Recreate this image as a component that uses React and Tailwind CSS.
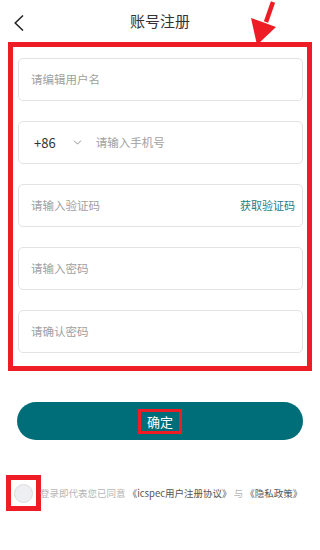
import { ChevronDown } from 'lucide-react'

const font = { fontFamily: '"Noto Sans CJK SC", "Noto Sans", sans-serif' }

function Field({ children, className = '' }) {
  return (
    <div className={`h-[43px] flex items-center border border-[#e3e3e3] rounded-[5px] bg-white px-[12px] ${className}`}>
      {children}
    </div>
  )
}

function App() {
  return (
    <div className="relative w-[320px] h-[550px] bg-white overflow-hidden" style={font}>
      <div className="h-[42px] flex items-center relative">
        <svg className="absolute left-[14px] top-[15px]" width="10" height="16" viewBox="0 0 10 16">
          <polyline points="9,0.5 1.2,8 9,15.5" fill="none" stroke="#222" strokeWidth="1.5" />
        </svg>
        <h1 className="w-full text-center text-[15px] text-[#333] leading-none -mt-[1px]">账号注册</h1>
      </div>

      <svg className="absolute left-[246px] top-0" width="36" height="48" viewBox="0 0 36 48">
        <line x1="27" y1="2" x2="20" y2="22" stroke="#ee1c25" strokeWidth="4.5" />
        <polygon points="5,18 30,27 11,45" fill="#ee1c25" />
      </svg>

      <div className="mx-[8px] border-[5px] border-[#ee1c25] pt-[11px] pb-[13px] pl-[5px] pr-[4px] flex flex-col gap-[20px]">
        <Field>
          <span className="text-[11.5px] text-[#a0a0a0]">请编辑用户名</span>
        </Field>
        <Field>
          <span className="text-[13px] text-[#333] ml-[3px]">+86</span>
          <ChevronDown size={13} strokeWidth={1.5} className="text-[#777] ml-[15px]" />
          <span className="text-[11.5px] text-[#a0a0a0] ml-[12px]">请输入手机号</span>
        </Field>
        <Field className="justify-between pr-[7px]">
          <span className="text-[11.5px] text-[#a0a0a0]">请输入验证码</span>
          <span className="text-[11px] text-[#1b7d85]">获取验证码</span>
        </Field>
        <Field>
          <span className="text-[11.5px] text-[#a0a0a0]">请输入密码</span>
        </Field>
        <Field>
          <span className="text-[11.5px] text-[#a0a0a0]">请确认密码</span>
        </Field>
      </div>

      <div className="px-[17px] mt-[31px]">
        <button className="w-full h-[38px] rounded-full bg-[#006e78] flex items-center justify-center">
          <span className="border-[3px] border-[#ee1c25] px-[6px] text-[13px] text-white leading-[19px]">确定</span>
        </button>
      </div>

      <div className="flex items-center mt-[35px] pl-[6px]">
        <div className="w-[35px] h-[36px] border-[5px] border-[#ee1c25] flex items-center justify-center shrink-0">
          <div className="w-[19px] h-[19px] rounded-full bg-[#eeeff2] border border-[#dcdcdc]" />
        </div>
        <p className="text-[9.5px] whitespace-nowrap text-[#b5b5b5] ml-[-1px]">
          登录即代表您已同意 <span className="text-[#555]">《icspec用户注册协议》</span> 与 <span className="text-[#555]">《隐私政策》</span>
        </p>
      </div>
    </div>
  )
}

export default App
